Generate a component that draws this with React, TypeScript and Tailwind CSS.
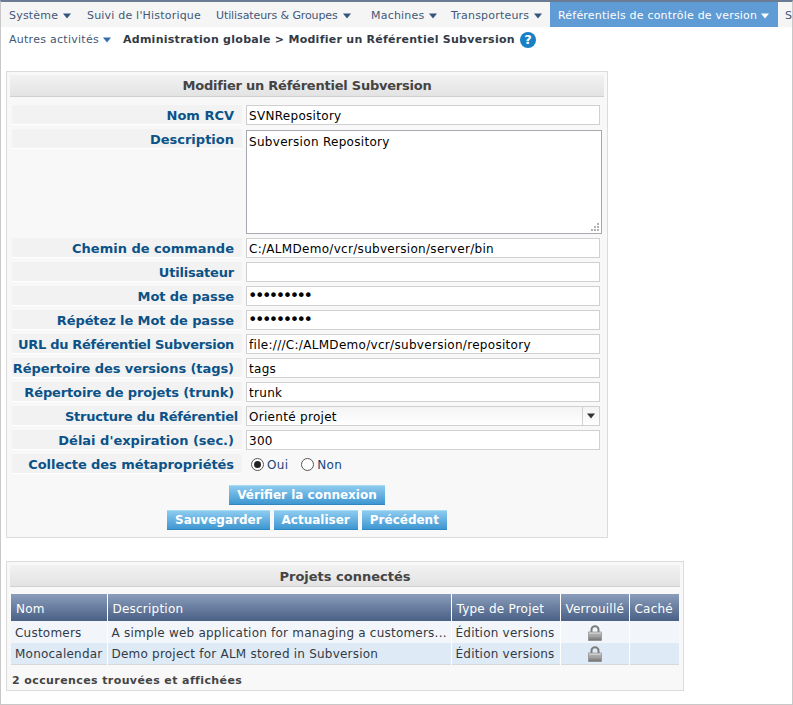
const NAV_ITEMS = [
  { label: "Système", arrow: true, className: "w-[78px]" },
  { label: "Suivi de l'Historique", arrow: false, className: "w-[129px]" },
  { label: "Utilisateurs & Groupes", arrow: true, className: "w-[155px] tracking-[-0.1px]" },
  { label: "Machines", arrow: true, className: "w-[80px]" },
  { label: "Transporteurs", arrow: true, className: "w-[107px]" },
];

const PROJECTS = [
  { name: "Customers", description: "A simple web application for managing a customers...", type: "Édition versions", rowClass: "h-[22px] bg-[#f2f6fb]" },
  { name: "Monocalendar", description: "Demo project for ALM stored in Subversion", type: "Édition versions", rowClass: "h-[21px] bg-[#deebf7]" },
];

function Caret({ className }: { className: string }) {
  return (
    <svg width="8" height="6" viewBox="0 0 8 6" className={className}>
      <path d="M0 0.5h8L4 5.5z" fill="currentColor" />
    </svg>
  );
}

function Lock() {
  return (
    <svg width="14" height="16" viewBox="0 0 14 16">
      <defs>
        <linearGradient id="lockBody" x1="0" y1="0" x2="0" y2="1">
          <stop offset="0" stopColor="#dcdcdc" />
          <stop offset="0.5" stopColor="#a8a8a8" />
          <stop offset="1" stopColor="#6e6e6e" />
        </linearGradient>
      </defs>
      <path d="M3.5 8V4.5a3.5 3.2 0 0 1 7 0V8" fill="none" stroke="#7d7d7d" strokeWidth="2" />
      <rect x="0.5" y="7" width="13" height="8.5" fill="url(#lockBody)" stroke="#808080" strokeWidth="0.6" />
      <path d="M1 10h12M1 12.5h12" stroke="#8e8e8e" strokeWidth="0.7" />
    </svg>
  );
}

function Row({
  label,
  labelClass = "pr-[8px]",
  children,
}: {
  label: string;
  labelClass?: string;
  children: React.ReactNode;
}) {
  return (
    <div className="flex gap-[4px] items-start">
      <div className={`w-[230px] h-[20px] ${labelClass} bg-[#f2f2f2] border-b border-white text-right font-bold text-[13px] leading-[21px] text-[#0b5288] whitespace-nowrap shrink-0`}>
        {label}
      </div>
      {children}
    </div>
  );
}

function TextInput({ value, type = "text" }: { value: string; type?: string }) {
  const textClass = type === "password" ? "pl-[1px] pr-[2px] text-[16px] tracking-[-2.5px]" : "px-[2px] pt-[2px] text-[12px] tracking-[0.3px]";
  return (
    <input
      type={type}
      readOnly
      value={value}
      className={`w-[354px] h-[20px] border border-[#d0d0d0] bg-white text-black outline-none ${textClass}`}
    />
  );
}

function Radio({ checked }: { checked?: boolean }) {
  return (
    <span className="w-[13px] h-[13px] rounded-full border border-[#555555] bg-white flex items-center justify-center shrink-0">
      {checked && <span className="w-[7px] h-[7px] rounded-full bg-[#222222]" />}
    </span>
  );
}

function Button({ children }: { children: React.ReactNode }) {
  return (
    <button className="h-[20px] px-[8px] bg-gradient-to-b from-[#8ccbef] to-[#3d97d1] border-t border-[#a8dcf5] border-b border-b-[#2f86c0] text-white font-bold text-[12px] leading-[17px]">
      {children}
    </button>
  );
}

export default function App() {
  return (
    <div className="w-[793px] h-[705px] overflow-hidden bg-white border-t-2 border-t-[#6a7b93] border-x border-x-[#c8c8c8] border-b border-b-[#c8c8c8] font-['DejaVu_Sans',sans-serif] text-[11px]">
      {/* Top menu */}
      <div className="flex h-[25px] bg-[#f5f5f5] text-[#3f5878] overflow-hidden whitespace-nowrap tracking-[0.2px]">
        {NAV_ITEMS.map((item) => (
          <div key={item.label} className={`pl-[8px] pt-[3px] flex items-center gap-[5px] shrink-0 ${item.className}`}>
            {item.label}
            {item.arrow && <Caret className="text-[#35557f]" />}
          </div>
        ))}
        <div className="w-[228px] pl-[8px] pt-[3px] flex items-center gap-[4px] bg-[#5f9bd4] text-white shrink-0">
          Référentiels de contrôle de version
          <Caret className="text-white" />
        </div>
        <div className="pl-[7px] pt-[3px] flex items-center shrink-0">S</div>
      </div>

      {/* Second row and breadcrumb */}
      <div className="flex items-center h-[25px] pl-[8px] whitespace-nowrap tracking-[0.27px] leading-[26px]">
        <span className="text-[#3f5878]">Autres activités</span>
        <Caret className="ml-[4px] text-[#2f6fb0]" />
        <span className="ml-[12px] font-bold text-[#333a45]">Administration globale &gt; Modifier un Référentiel Subversion</span>
        <span className="ml-[5px] w-[16px] h-[16px] rounded-full bg-[#1a7fc4] text-white font-bold text-[13px] leading-[16px] text-center tracking-normal">?</span>
      </div>

      {/* Edit form */}
      <div className="mt-[19px] ml-[5px] w-[602px] h-[467px] border border-[#dcdcdc] bg-[#f8f8f8] p-[3px]">
        <div className="h-[22px] bg-gradient-to-b from-[#f2f2f2] to-[#e3e3e3] border-b border-[#d0d0d0] text-center font-bold text-[13px] tracking-[-0.23px] leading-[21px] text-[#444444]">
          Modifier un Référentiel Subversion
        </div>
        <div className="mt-[8px] ml-[2px] flex flex-col gap-[4px]">
          <Row label="Nom RCV">
            <TextInput value="SVNRepository" />
          </Row>
          <Row label="Description">
            <div className="relative w-[356px] h-[104px] mt-[1px]">
              <textarea
                readOnly
                value="Subversion Repository"
                className="block w-full h-full resize-none border border-[#a8a8b0] bg-white px-[2px] py-[2px] text-[12px] tracking-[0.3px] text-black outline-none"
              />
              {/* resize grip */}
              <svg width="9" height="9" viewBox="0 0 9 9" className="absolute right-[2px] bottom-[2px]" fill="#b4b4b4">
                <rect x="6" y="0" width="2" height="2" />
                <rect x="3" y="3" width="2" height="2" />
                <rect x="6" y="3" width="2" height="2" />
                <rect x="0" y="6" width="2" height="2" />
                <rect x="3" y="6" width="2" height="2" />
                <rect x="6" y="6" width="2" height="2" />
              </svg>
            </div>
          </Row>
          <Row label="Chemin de commande">
            <TextInput value="C:/ALMDemo/vcr/subversion/server/bin" />
          </Row>
          <Row label="Utilisateur" labelClass="pr-[8px] tracking-[-0.2px]">
            <TextInput value="" />
          </Row>
          <Row label="Mot de passe" labelClass="pr-[8px] tracking-[-0.1px]">
            <TextInput type="password" value="123456789" />
          </Row>
          <Row label="Répétez le Mot de passe" labelClass="pr-[8px] tracking-[-0.1px]">
            <TextInput type="password" value="123456789" />
          </Row>
          <Row label="URL du Référentiel Subversion" labelClass="pr-[8px] tracking-[-0.3px]">
            <TextInput value="file:///C:/ALMDemo/vcr/subversion/repository" />
          </Row>
          <Row label="Répertoire des versions (tags)" labelClass="pr-[8px] tracking-[-0.07px]">
            <TextInput value="tags" />
          </Row>
          <Row label="Répertoire de projets (trunk)" labelClass="pr-[8px] tracking-[-0.13px]">
            <TextInput value="trunk" />
          </Row>
          <Row label="Structure du Référentiel" labelClass="pr-[4px] tracking-[-0.25px]">
            <div className="w-[354px] h-[20px] border border-[#d0d0d0] bg-gradient-to-b from-[#f4f4f4] to-white flex items-center text-[12px] tracking-[0.3px] text-black">
              <span className="flex-1 pl-[2px] pt-[2px]">Orienté projet</span>
              <span className="w-[17px] h-full border-l border-[#d0d0d0] flex items-center justify-center">
                <Caret className="text-[#333333]" />
              </span>
            </div>
          </Row>
          <Row label="Délai d'expiration (sec.)">
            <TextInput value="300" />
          </Row>
          <Row label="Collecte des métapropriétés" labelClass="pr-[8px] tracking-[-0.07px]">
            <div className="flex items-center h-[20px] pl-[5px] pt-[1px] text-[12px] tracking-[0.3px] text-[#17457a]">
              <Radio checked />
              <span className="ml-[3px] pt-[1px]">Oui</span>
              <span className="ml-[13px]">
                <Radio />
              </span>
              <span className="ml-[3px] pt-[1px]">Non</span>
            </div>
          </Row>
        </div>
        <div className="mt-[11px] flex flex-col items-center gap-[5px]">
          <Button>Vérifier la connexion</Button>
          <div className="flex gap-[4px]">
            <Button>Sauvegarder</Button>
            <Button>Actualiser</Button>
            <Button>Précédent</Button>
          </div>
        </div>
      </div>

      {/* Connected projects */}
      <div className="mt-[23px] ml-[5px] w-[678px] h-[130px] border border-[#dcdcdc] bg-[#f8f8f8] p-[3px]">
        <div className="h-[22px] bg-gradient-to-b from-[#f2f2f2] to-[#e3e3e3] border-b border-[#d0d0d0] text-center font-bold text-[13px] leading-[23px] text-[#444444]">
          Projets connectés
        </div>
        <table className="mt-[7px] ml-[1px] w-[668px] table-fixed border-collapse border-b border-[#d8d8d8] text-[12px] tracking-[0.22px]">
          <thead>
            <tr className="h-[27px] text-white bg-gradient-to-b from-[#8a9dbb] to-[#4a6085] text-left font-normal">
              <th className="w-[96px] pl-[5px] pt-[2px] font-normal border-r border-white">Nom</th>
              <th className="w-[344px] pl-[5px] pt-[2px] font-normal border-r border-white">Description</th>
              <th className="w-[109px] pl-[5px] pt-[2px] font-normal border-r border-white">Type de Projet</th>
              <th className="w-[69px] pl-[5px] pt-[2px] font-normal border-r border-white">Verrouillé</th>
              <th className="pl-[5px] pt-[2px] font-normal">Caché</th>
            </tr>
          </thead>
          <tbody>
            {PROJECTS.map((p) => (
              <tr key={p.name} className={`${p.rowClass} text-[#333a45]`}>
                <td className="pl-[4px] pt-[2px] border-r border-white whitespace-nowrap">{p.name}</td>
                <td className="pl-[4px] pt-[2px] border-r border-white whitespace-nowrap overflow-hidden">{p.description}</td>
                <td className="pl-[4px] pt-[2px] border-r border-white whitespace-nowrap">{p.type}</td>
                <td className="pt-[2px] border-r border-white">
                  <div className="flex justify-center">
                    <Lock />
                  </div>
                </td>
                <td />
              </tr>
            ))}
          </tbody>
        </table>
        <div className="mt-[8px] ml-[2px] font-bold text-[11px] tracking-[0.4px] text-[#444444]">2 occurences trouvées et affichées</div>
      </div>
    </div>
  );
}
